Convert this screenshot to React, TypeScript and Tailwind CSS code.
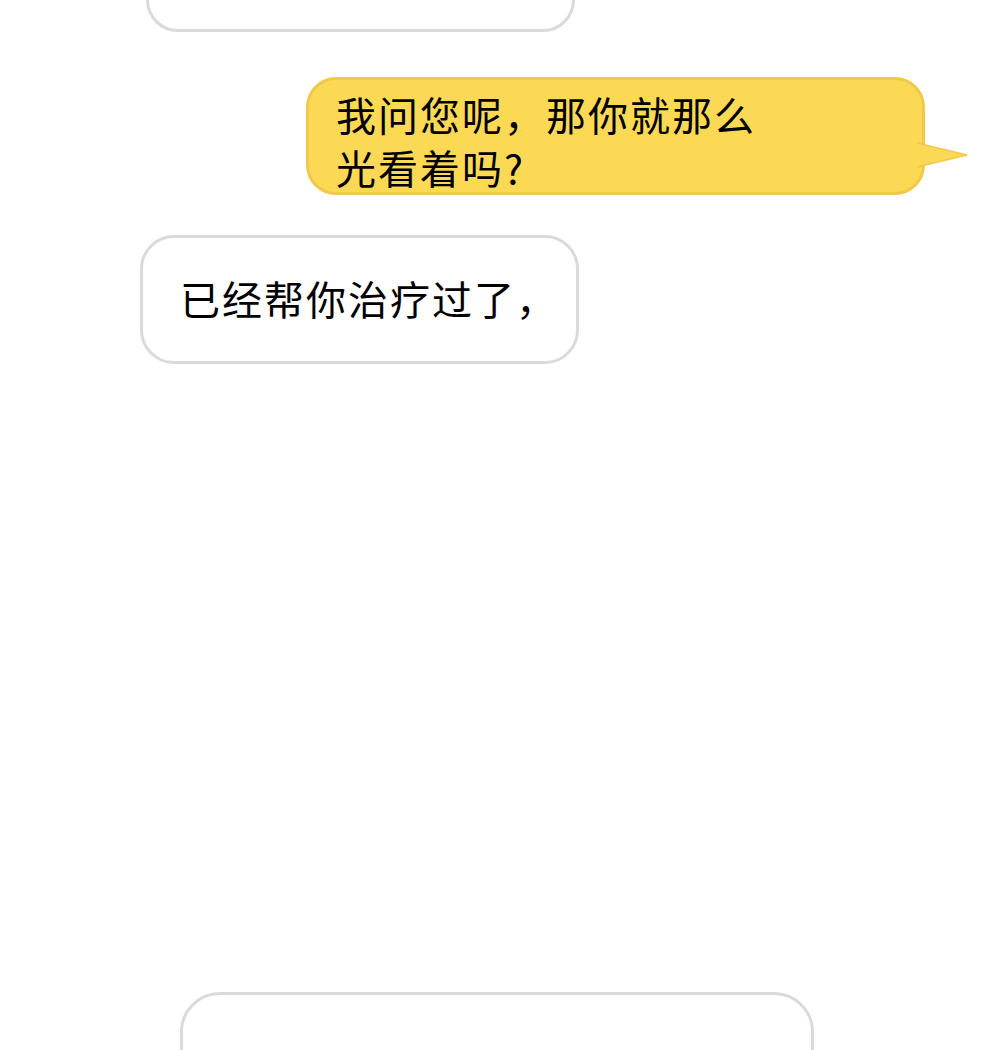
export default function App() {
  const cjk = { fontFamily: '"Noto Sans CJK SC", "Noto Sans", sans-serif' };
  return (
    <div className="h-[1050px] w-[1000px] overflow-hidden bg-white" style={cjk}>
      <div className="flex flex-col items-start">
        {/* previous message, mostly scrolled off */}
        <div className="-mt-[68px] ml-[146px] h-[100px] w-[429px] rounded-[32px] border-[3px] border-[#dadada] bg-white" />

        {/* outgoing yellow bubble */}
        <div className="relative ml-[306px] mt-[45px] h-[118px] w-[619px] rounded-[30px] border-[3px] border-[#f1c94a] bg-[#fcd954] pl-[27px] pt-[8px]">
          <p className="text-[40px] leading-[53px] tracking-[2px] text-black">
            我问您呢，那你就那么
            <br />
            光看着吗?
          </p>
          <svg
            className="absolute left-[608px] top-[60px]"
            width="54"
            height="30"
            viewBox="0 0 54 30"
          >
            <path d="M0 3 L50 15 L0 27" fill="#fcd954" stroke="#f1c94a" strokeWidth="1.5" />
          </svg>
        </div>

        {/* incoming white bubble */}
        <div className="ml-[140px] mt-[40px] flex h-[129px] w-[439px] items-center rounded-[34px] border-[3px] border-[#dadada] bg-white pl-[37px]">
          <p className="-mt-[4px] text-[40px] leading-[50px] tracking-[2px] text-black">已经帮你治疗过了，</p>
        </div>

        {/* next message, cut off at the bottom */}
        <div className="ml-[180px] mt-[628px] h-[120px] w-[634px] rounded-[40px] border-[3px] border-[#dadada] bg-white" />
      </div>
    </div>
  );
}
